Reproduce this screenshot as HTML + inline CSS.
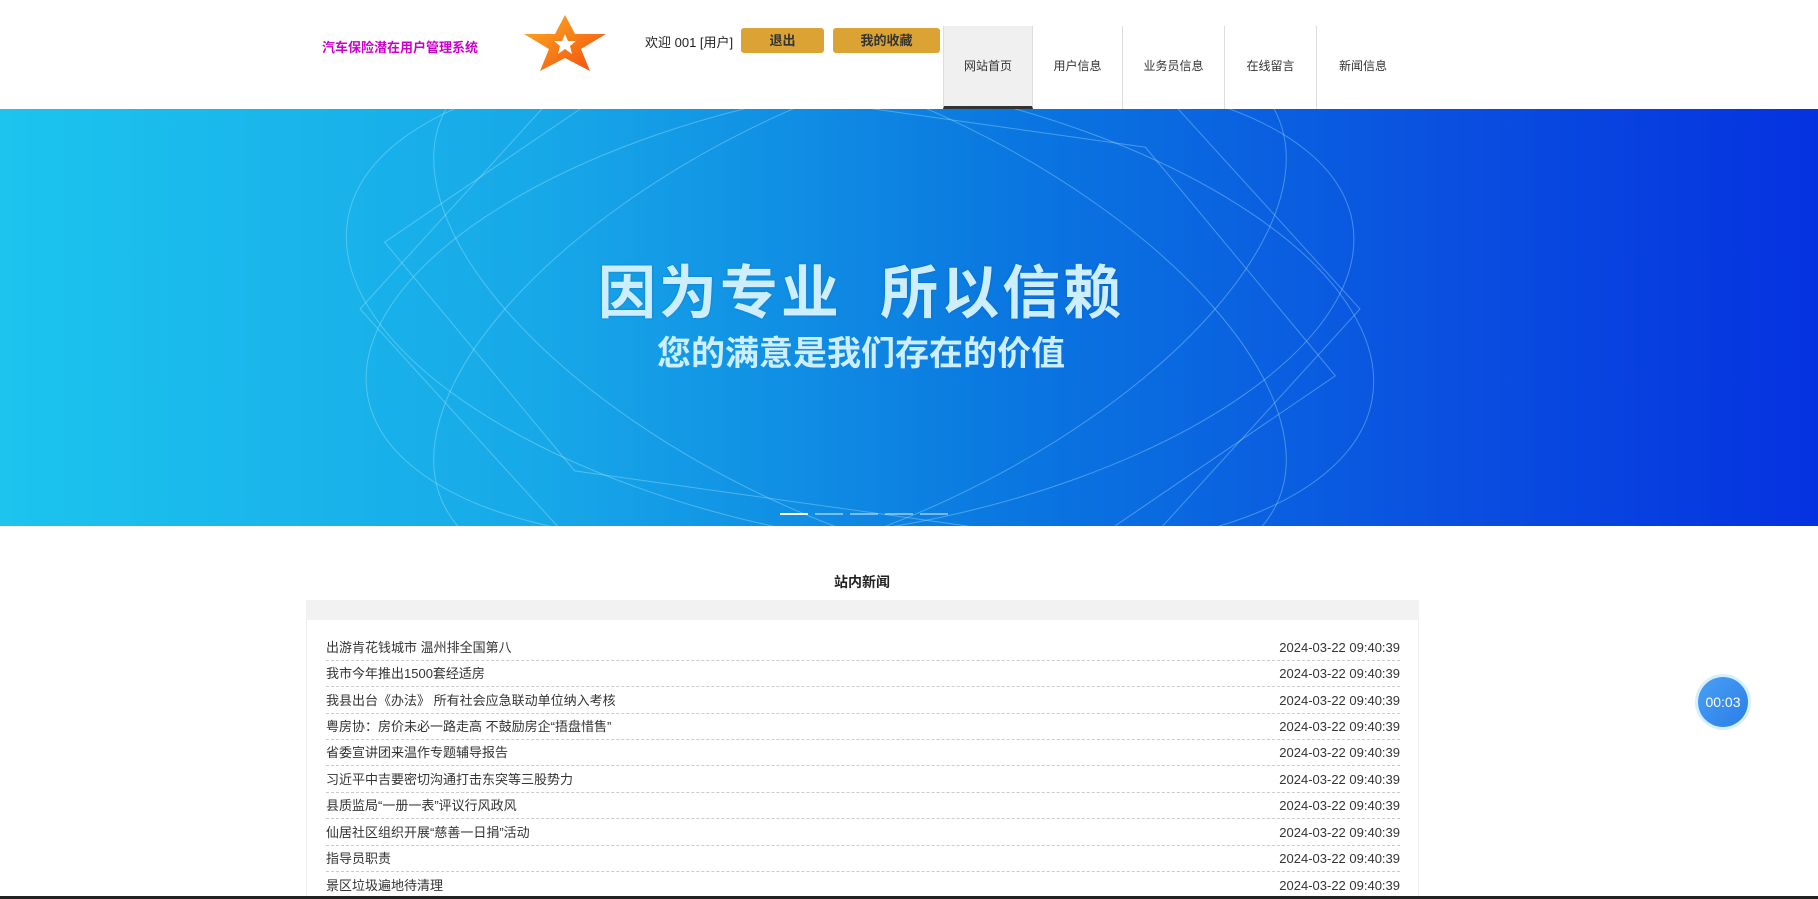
<!DOCTYPE html>
<html><head><meta charset="utf-8"><style>
*{margin:0;padding:0;box-sizing:border-box}
body{width:1818px;height:899px;overflow:hidden;background:#fff;font-family:"Liberation Sans","Noto Sans CJK SC",sans-serif;position:relative}
.abs{position:absolute}
.title{left:322px;top:37px;font-size:13px;color:#c0c;font-weight:bold}
.btn{top:28px;height:25px;background:#dba234;color:#333;font-size:13px;font-weight:bold;text-align:center;line-height:25px;border-radius:3px}
.nav{top:26px;height:83px;font-size:12px;color:#333;text-align:center;line-height:80px;border-right:1px solid #ddd}
.hero{left:0;top:109px;width:1818px;height:417px;background:linear-gradient(90deg,#1cc4ee 0%,#17a8e8 30%,#0a78e0 55%,#0a4fe0 80%,#0532e0 100%);overflow:hidden}
.row{position:absolute;left:326px;width:1074px;height:26px;border-bottom:1px dashed #ccc;font-size:13px;color:#333;line-height:26px}
.row span{float:right}
</style></head><body>
<div class="abs title">汽车保险潜在用户管理系统</div>
<svg class="abs" style="left:522px;top:14px" width="86" height="58" viewBox="0 0 86 58">
<defs><linearGradient id="g" x1="0" y1="0" x2="1" y2="1"><stop offset="0" stop-color="#ffb020"/><stop offset="1" stop-color="#f04a10"/></linearGradient></defs>
<polygon points="43,1 53,20 84,20 59,35 68,57 43,44 18,57 27,35 2,20 33,20" fill="url(#g)"/>
<polygon points="43,20 46,27 54,27 48,32 50,40 43,35 36,40 38,32 32,27 40,27" fill="#fff"/>
</svg>
<div class="abs" style="left:645px;top:32px;font-size:13px;color:#222">欢迎 001 [用户]</div>
<div class="abs btn" style="left:741px;width:83px">退出</div>
<div class="abs btn" style="left:833px;width:107px">我的收藏</div>
<div class="abs nav" style="left:943px;width:90px;background:#f0f0f0;border-left:1px solid #ddd;border-bottom:3px solid #333">网站首页</div>
<div class="abs nav" style="left:1033px;width:90px">用户信息</div>
<div class="abs nav" style="left:1123px;width:102px">业务员信息</div>
<div class="abs nav" style="left:1225px;width:92px">在线留言</div>
<div class="abs nav" style="left:1317px;width:92px;border-right:none">新闻信息</div>
<div class="abs hero">
<svg width="1818" height="417" style="position:absolute;left:0;top:0" fill="none" stroke="rgba(190,240,255,0.35)" stroke-width="1">
<ellipse cx="860" cy="200" rx="520" ry="230" transform="rotate(10 860 200)"/>
<ellipse cx="860" cy="200" rx="500" ry="220" transform="rotate(-10 860 200)"/>
<ellipse cx="860" cy="200" rx="460" ry="210" transform="rotate(25 860 200)"/>
<ellipse cx="860" cy="200" rx="460" ry="210" transform="rotate(-25 860 200)"/>
<polygon points="360,200 560,-20 1160,-20 1360,200 1160,420 560,420"/>
<polygon points="380,200 600,0 1120,0 1340,200 1120,400 600,400" transform="rotate(8 860 200)"/>
</svg>
<div class="abs" style="left:0;width:1722px;top:137px;text-align:center;font-size:58px;color:#cdeefc;letter-spacing:3px;font-weight:bold;text-shadow:0 0 2px rgba(0,60,160,.4)">因为专业&nbsp;&nbsp;所以信赖</div>
<div class="abs" style="left:0;width:1722px;top:217px;text-align:center;font-size:34px;color:#cdeefc;font-weight:bold">您的满意是我们存在的价值</div>
<div class="abs" style="left:780px;top:404px;width:28px;height:2px;background:#fff"></div>
<div class="abs" style="left:815px;top:404px;width:28px;height:2px;background:rgba(255,255,255,.45)"></div>
<div class="abs" style="left:850px;top:404px;width:28px;height:2px;background:rgba(255,255,255,.45)"></div>
<div class="abs" style="left:885px;top:404px;width:28px;height:2px;background:rgba(255,255,255,.45)"></div>
<div class="abs" style="left:920px;top:404px;width:28px;height:2px;background:rgba(255,255,255,.45)"></div>
</div>
<div class="abs" style="left:0;width:1724px;top:572px;text-align:center;font-size:14px;font-weight:bold;color:#222">站内新闻</div>
<div class="abs" style="left:306px;top:600px;width:1113px;height:20px;background:#f2f2f2"></div>
<div class="abs" style="left:306px;top:620px;width:1113px;height:279px;border:1px solid #f0f0f0;border-top:none"></div>
<div class="row" style="top:635px">出游肯花钱城市 温州排全国第八<span>2024-03-22 09:40:39</span></div>
<div class="row" style="top:661px">我市今年推出1500套经适房<span>2024-03-22 09:40:39</span></div>
<div class="row" style="top:688px">我县出台《办法》 所有社会应急联动单位纳入考核<span>2024-03-22 09:40:39</span></div>
<div class="row" style="top:714px">粤房协：房价未必一路走高 不鼓励房企“捂盘惜售”<span>2024-03-22 09:40:39</span></div>
<div class="row" style="top:740px">省委宣讲团来温作专题辅导报告<span>2024-03-22 09:40:39</span></div>
<div class="row" style="top:767px">习近平中吉要密切沟通打击东突等三股势力<span>2024-03-22 09:40:39</span></div>
<div class="row" style="top:793px">县质监局“一册一表”评议行风政风<span>2024-03-22 09:40:39</span></div>
<div class="row" style="top:820px">仙居社区组织开展“慈善一日捐”活动<span>2024-03-22 09:40:39</span></div>
<div class="row" style="top:846px">指导员职责<span>2024-03-22 09:40:39</span></div>
<div class="row" style="top:873px;border-bottom:none">景区垃圾遍地待清理<span>2024-03-22 09:40:39</span></div>
<div class="abs" style="left:0;top:896px;width:1818px;height:3px;background:#222"></div>
<div class="abs" style="left:1698px;top:677px;width:50px;height:50px;border-radius:50%;background:linear-gradient(135deg,#4aa0f5,#2a7de8);box-shadow:0 0 0 3px #d6f0ff;color:#fff;font-size:14px;text-align:center;line-height:50px">00:03</div>
</body></html>
